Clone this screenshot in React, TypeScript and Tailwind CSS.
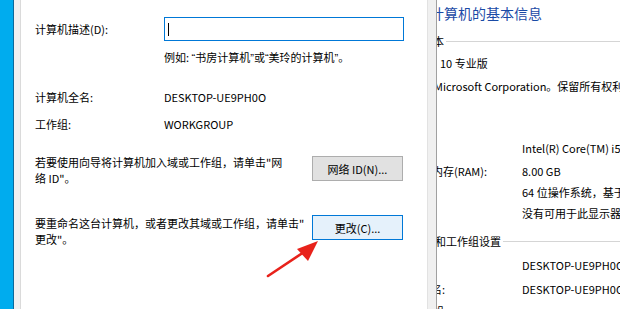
import React from "react";

const Q = ({ c }: { c: string }) => <span className="font-['Liberation_Sans',sans-serif]">{c}</span>;

export default function App() {
  return (
    <div className="relative w-[620px] h-[309px] flex overflow-hidden bg-white text-[11px] leading-[16px] text-black font-['Noto_Sans_CJK_SC',sans-serif]">
      <div className="w-[13px] shrink-0 bg-[#00acee]" />
      <div className="w-[1px] shrink-0 bg-[#0a6a9c]" />
      <div className="w-[6px] shrink-0 bg-[#f0f0f0]" />
      <div className="w-[1px] shrink-0 bg-[#dadada]" />
      {/* dialog */}
      <div className="w-[406px] shrink-0 bg-white pl-[14px] pt-[17px] flex flex-col">
        <div className="flex items-center h-[24px]">
          <div className="w-[129px] shrink-0">计算机描述(D):</div>
          <div className="w-[240px] h-[24px] border border-[#0078d7] flex items-center pl-[3px]">
            <div className="w-[1px] h-[13px] bg-black" />
          </div>
        </div>
        <div className="mt-[8px] pl-[129px]">
          例如: <Q c="“" />书房计算机<Q c="”" />或<Q c="“" />美玲的计算机<Q c="”" />。
        </div>
        <div className="mt-[23px] flex">
          <div className="w-[129px] shrink-0">计算机全名:</div>
          <div>DESKTOP-UE9PH0O</div>
        </div>
        <div className="mt-[11px] flex">
          <div className="w-[129px] shrink-0">工作组:</div>
          <div>WORKGROUP</div>
        </div>
        <div className="mt-[22px] flex items-start">
          <div className="w-[277px] shrink-0">
            若要使用向导将计算机加入域或工作组，请单击"网
            <br />
            络 ID"。
          </div>
          <div className="mt-[2px] w-[91px] h-[25px] bg-[#e1e1e1] border border-[#adadad] flex items-center justify-center">
            网络 ID(N)...
          </div>
        </div>
        <div className="mt-[29px] flex items-start">
          <div className="w-[277px] shrink-0">
            要重命名这台计算机，或者更改其域或工作组，请单击"
            <br />
            更改"。
          </div>
          <div className="w-[91px] h-[25px] bg-[#e5f1fb] border border-[#0078d7] flex items-center justify-center">
            更改(C)...
          </div>
        </div>
      </div>
      <div className="w-[9px] shrink-0 bg-[#f0f0f0] border-l border-[#e2e2e2]" />
      <div className="w-[1px] shrink-0 bg-[#a0a0a0]" />
      {/* right panel */}
      <div className="flex-1 min-w-0 bg-white overflow-hidden flex flex-col whitespace-nowrap">
        <div className="mt-[3px] ml-[-7px] text-[14px] leading-[20px] text-[#1a4aa6]">计算机的基本信息</div>
        <div className="mt-[10px] flex items-center h-[16px]">
          <div className="ml-[-4px] shrink-0">本</div>
          <div className="flex-1 h-[1px] bg-[#d5d5d5] ml-[2px]" />
        </div>
        <div className="mt-[6px] ml-[3px]">10 专业版</div>
        <div className="mt-[7px] ml-[-3px]">Microsoft Corporation。保留所有权利。</div>
        <div className="mt-[34px] h-[1px] bg-[#d5d5d5]" />
        <div className="mt-[12px] flex">
          <div className="w-[85px] shrink-0" />
          <div>Intel(R) Core(TM) i5-8250U CPU</div>
        </div>
        <div className="mt-[7px] flex">
          <div className="w-[85px] shrink-0 ml-[-5px]">内存(RAM):</div>
          <div className="ml-[5px]">8.00 GB</div>
        </div>
        <div className="mt-[5px] flex">
          <div className="w-[85px] shrink-0" />
          <div>64 位操作系统，基于 x64 的处理器</div>
        </div>
        <div className="mt-[5px] flex">
          <div className="w-[85px] shrink-0" />
          <div>没有可用于此显示器的笔或触控输入</div>
        </div>
        <div className="mt-[12px] flex items-center h-[16px]">
          <div className="ml-[-2px] shrink-0">和工作组设置</div>
          <div className="flex-1 h-[1px] bg-[#d5d5d5] ml-[2px]" />
        </div>
        <div className="mt-[8px] flex">
          <div className="w-[85px] shrink-0" />
          <div>DESKTOP-UE9PH0O</div>
        </div>
        <div className="mt-[8px] flex">
          <div className="w-[85px] shrink-0 ml-[-6px]">名:</div>
          <div className="ml-[6px]">DESKTOP-UE9PH0O</div>
        </div>
        <div className="mt-[6px] ml-[-4px]">组:</div>
      </div>
      {/* red arrow */}
      <svg className="absolute left-0 top-0 pointer-events-none" width="620" height="309">
        <line x1="268" y1="276" x2="304" y2="252" stroke="#e8221b" strokeWidth="2.6" strokeLinecap="round" />
        <polygon points="318,241 297,249 308,261" fill="#e8221b" />
      </svg>
    </div>
  );
}
